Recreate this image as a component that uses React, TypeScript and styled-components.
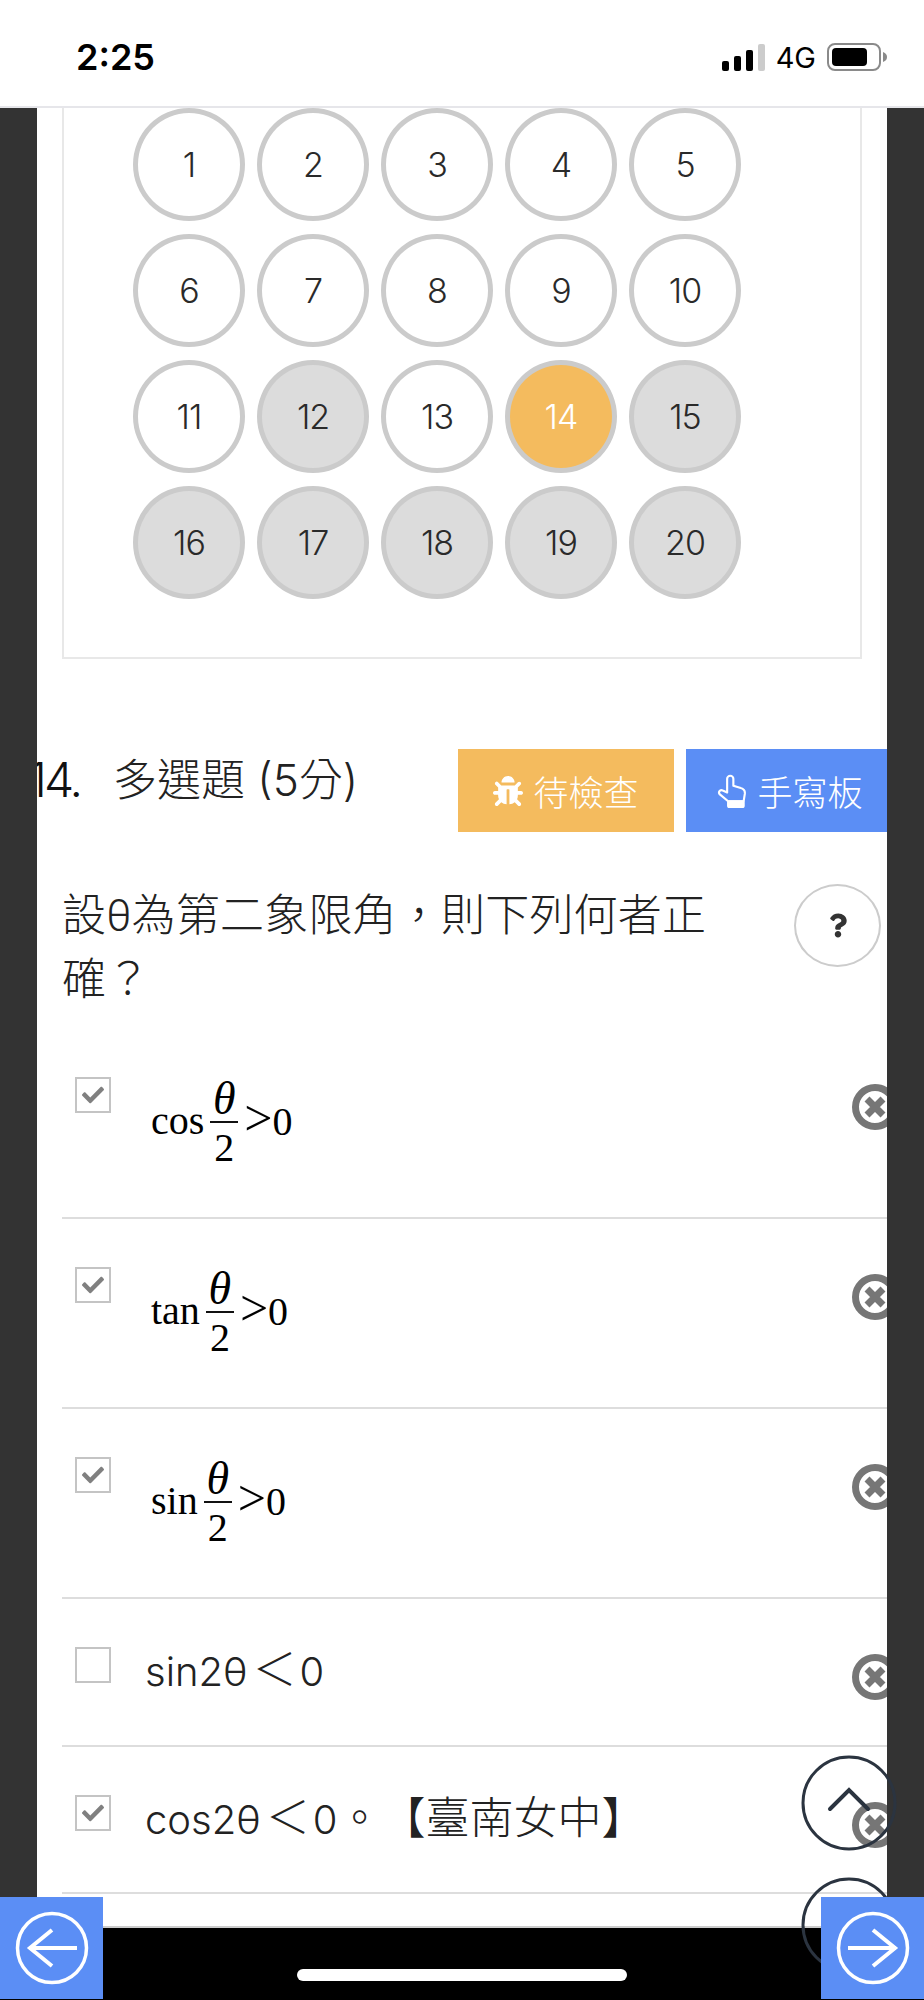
import { FC } from 'react'
import { FaBug, FaCheck, FaQuestion } from 'react-icons/fa'
import styled, { createGlobalStyle } from 'styled-components'

const CJK = `Roboto, "Noto Sans CJK TC", sans-serif`
const MIXED = `Inter, "Noto Sans CJK TC", sans-serif`

const GlobalStyle = createGlobalStyle`
  html, body {
    margin: 0;
    padding: 0;
    background: #fff;
  }
`

const numbers = Array.from({ length: 20 }, (_, i) => i + 1)
const answered = [12, 15, 16, 17, 18, 19, 20]

const Fraction: FC<{ name: string }> = ({ name }) => (
  <MathLine>
    <MathName>{name}</MathName>
    <Frac>
      <FracTop>θ</FracTop>
      <FracBar />
      <FracBottom>2</FracBottom>
    </Frac>
    <MathTail>
      <MathGt>&gt;</MathGt>0
    </MathTail>
  </MathLine>
)

const RemoveIcon = () => (
  <RemoveMark viewBox="0 0 46 46">
    <circle cx="23" cy="23" r="19.5" fill="#fff" stroke="#767676" strokeWidth="7" />
    <path d="M15 15 L31 31 M31 15 L15 31" stroke="#767676" strokeWidth="7" />
  </RemoveMark>
)

const HandIcon = () => (
  <svg viewBox="0 0 30 35" fill="none" stroke="#fff" strokeWidth="2.2" strokeLinejoin="round">
    <path d="M10 19 V5 a3.2 3.2 0 0 1 6.4 0 V12 L24 14.5 c3.5 1 4.6 3 4.2 6 L27 28 H11 L2.5 21 c-2 -2 0 -5.5 3 -4 L10 19 Z" />
    <rect x="11" y="28" width="16" height="6" rx="1" fill="#fff" />
  </svg>
)

const Option: FC<{ height: number; checked?: boolean; children: React.ReactNode }> = ({
  height,
  checked,
  children
}) => (
  <OptionRow $height={height}>
    <CheckBox>{checked && <FaCheck />}</CheckBox>
    <OptionBody>{children}</OptionBody>
    <RemoveIcon />
  </OptionRow>
)

const App = () => (
  <Page lang="zh-TW">
    <GlobalStyle />
    <StatusBar>
      <Clock>2:25</Clock>
      <StatusIcons>
        <svg width="44" height="27" viewBox="0 0 44 27">
          <rect x="1" y="17" width="7" height="10" rx="2" fill="#000" />
          <rect x="13" y="12" width="7" height="15" rx="2" fill="#000" />
          <rect x="25" y="6" width="7" height="21" rx="2" fill="#000" />
          <rect x="37" y="0" width="7" height="27" rx="2" fill="#ccc" />
        </svg>
        <Network>4G</Network>
        <svg width="62" height="28" viewBox="0 0 62 28">
          <rect x="1" y="1" width="52" height="26" rx="7" fill="none" stroke="#8a8a8a" strokeWidth="2" />
          <rect x="5" y="5" width="35" height="18" rx="4" fill="#000" />
          <path d="M56 9 C59 10 60 12 60 14 C60 16 59 18 56 19 Z" fill="#8a8a8a" />
        </svg>
      </StatusIcons>
    </StatusBar>

    <Middle>
      <Side />
      <Content>
        <NumberPanel>
          <NumberGrid>
            {numbers.map((n) => (
              <NumberCircle key={n} $current={n === 14} $answered={answered.includes(n)}>
                {n}
              </NumberCircle>
            ))}
          </NumberGrid>
        </NumberPanel>

        <QuestionHeader>
          <QuestionNo>14.</QuestionNo>
          <QuestionType>多選題 (5分)</QuestionType>
          <ActionButton $color="#f4bb5e" $width={216}>
            <FaBug />
            待檢查
          </ActionButton>
          <ActionButton $color="#5b8ef5" $width={201} $nudge={7}>
            <HandIcon />
            手寫板
          </ActionButton>
        </QuestionHeader>

        <QuestionRow>
          <QuestionText>設θ為第二象限角，則下列何者正確？</QuestionText>
          <HelpButton>
            <FaQuestion />
          </HelpButton>
        </QuestionRow>

        <Option height={190} checked>
          <Fraction name="cos" />
        </Option>
        <Option height={190} checked>
          <Fraction name="tan" />
        </Option>
        <Option height={190} checked>
          <Fraction name="sin" />
        </Option>
        <Option height={148}>
          <OptionText>
            <Latin>sin2θ</Latin>
            <LessThan>＜</LessThan>
            <Latin>0</Latin>
          </OptionText>
        </Option>
        <Option height={147} checked>
          <OptionText>
            <Latin>cos2θ</Latin>
            <LessThan>＜</LessThan>
            <Latin>0</Latin>。【臺南女中】
          </OptionText>
        </Option>
      </Content>
      <Side />
    </Middle>

    <Footer>
      <HomeBar />
    </Footer>

    <ScrollCircle $top={1755}>
      <svg width="96" height="96" viewBox="0 0 96 96">
        <circle cx="48" cy="48" r="46" fill="none" stroke="#2b3440" strokeWidth="3" />
        <path d="M29 54 L48 35 L67 54" fill="none" stroke="#2b3440" strokeWidth="4" strokeLinecap="round" />
      </svg>
    </ScrollCircle>
    <ScrollCircle $top={1877}>
      <svg width="96" height="96" viewBox="0 0 96 96">
        <circle cx="48" cy="48" r="46" fill="none" stroke="#2b3440" strokeWidth="3" />
      </svg>
    </ScrollCircle>

    <NavButton $side="left">
      <svg width="74" height="74" viewBox="0 0 74 74">
        <circle cx="37" cy="37" r="34.5" fill="none" stroke="#fff" strokeWidth="3.5" />
        <path d="M62 37 H15 M37 19 L15 37 L37 55" fill="none" stroke="#fff" strokeWidth="4" />
      </svg>
    </NavButton>
    <NavButton $side="right">
      <svg width="74" height="74" viewBox="0 0 74 74">
        <circle cx="37" cy="37" r="34.5" fill="none" stroke="#fff" strokeWidth="3.5" />
        <path d="M12 37 H59 M37 19 L59 37 L37 55" fill="none" stroke="#fff" strokeWidth="4" />
      </svg>
    </NavButton>
  </Page>
)

const Page = styled.div`
  position: relative;
  width: 924px;
  height: 2000px;
  overflow: hidden;
  display: flex;
  flex-direction: column;
  background: #fff;
  text-spacing-trim: space-all;
`

const StatusBar = styled.div`
  height: 108px;
  flex: none;
  display: flex;
  align-items: center;
  justify-content: space-between;
  padding: 8px 35px 0 76px;
  box-sizing: border-box;
  border-bottom: 2px solid #e6e6ea;
`

const Clock = styled.div`
  font: 600 36px Inter, sans-serif;
  color: #000;
`

const StatusIcons = styled.div`
  display: flex;
  align-items: center;
  gap: 11px;
`

const Network = styled.div`
  font: 400 29px Inter, sans-serif;
  color: #000;
`

const Middle = styled.div`
  flex: 1;
  min-height: 0;
  display: flex;
`

const Side = styled.div`
  width: 37px;
  flex: none;
  background: #333;
`

const Content = styled.div`
  flex: 1;
  min-width: 0;
  overflow: hidden;
  background: #fff;
`

const NumberPanel = styled.div`
  margin: 0 25px;
  height: 551px;
  box-sizing: border-box;
  border: 2px solid #e8e8e8;
  border-top: 0;
  padding-left: 70px;
`

const NumberGrid = styled.div`
  display: grid;
  grid-template-columns: repeat(5, 112px);
  grid-auto-rows: 113px;
  column-gap: 12px;
  row-gap: 13px;
  margin-left: -1px;
`

const NumberCircle = styled.div<{ $current: boolean; $answered: boolean }>`
  display: flex;
  align-items: center;
  justify-content: center;
  border-radius: 50%;
  border: 5px solid #cbcbcb;
  box-sizing: border-box;
  font: 300 34px Inter, sans-serif;
  letter-spacing: -1px;
  color: ${(p) => (p.$current ? '#fff' : '#2a2a2a')};
  background: ${(p) => (p.$current ? '#f4bb5e' : p.$answered ? '#dcdcdc' : '#fff')};
`

const QuestionHeader = styled.div`
  margin-top: 90px;
  height: 83px;
  display: flex;
  align-items: flex-start;
`

const QuestionNo = styled.div`
  width: 86px;
  margin-left: -9px;
  flex: none;
  font: 300 48px/62px Inter, sans-serif;
  letter-spacing: -3px;
  color: #111;
`

const QuestionType = styled.div`
  flex: 1;
  margin-left: -1px;
  font: 300 44px/62px ${MIXED};
  color: #222;
  white-space: nowrap;
`

const ActionButton = styled.div<{ $color: string; $width: number; $nudge?: number }>`
  width: ${(p) => p.$width}px;
  height: 83px;
  flex: none;
  box-sizing: border-box;
  margin-left: 12px;
  padding-left: ${(p) => p.$nudge ?? 0}px;
  display: flex;
  align-items: center;
  justify-content: center;
  gap: 10px;
  background: ${(p) => p.$color};
  color: #fff;
  font: 300 35px ${CJK};
  svg {
    width: 30px;
    height: 34px;
  }
`

const QuestionRow = styled.div`
  margin-top: 52px;
  display: flex;
  justify-content: space-between;
  padding: 0 6px 17px 25px;
`

const QuestionText = styled.div`
  width: 660px;
  font: 300 44px/64px ${CJK};
  letter-spacing: 0.2px;
  color: #222;
`

const HelpButton = styled.div`
  width: 87px;
  height: 83px;
  box-sizing: border-box;
  border: 2px solid #ccc;
  border-radius: 50%;
  display: flex;
  align-items: center;
  justify-content: center;
  color: #333;
  svg {
    width: 18px;
    height: 25px;
  }
`

const OptionRow = styled.div<{ $height: number }>`
  height: ${(p) => p.$height}px;
  box-sizing: border-box;
  margin-left: 25px;
  padding: 48px 0 0 13px;
  display: flex;
  align-items: flex-start;
  border-bottom: 2px solid #ddd;
`

const CheckBox = styled.div`
  width: 36px;
  height: 36px;
  flex: none;
  box-sizing: border-box;
  border: 2px solid #c4c4c4;
  display: flex;
  align-items: center;
  justify-content: center;
  color: #808080;
  svg {
    width: 22px;
    height: 22px;
  }
`

const OptionBody = styled.div`
  flex: 1;
  min-width: 0;
  margin-left: 34px;
`

const OptionText = styled.div`
  font: 300 44px/46px ${MIXED};
  color: #222;
  white-space: nowrap;
`

const Latin = styled.span`
  font-size: 40px;
`

const LessThan = styled.span`
  margin: 0 3px 0 5px;
`

const RemoveMark = styled.svg`
  width: 46px;
  height: 46px;
  flex: none;
  margin: 7px -11px 0 0;
`

const MathLine = styled.div`
  display: inline-flex;
  align-items: flex-start;
  margin-left: 6px;
  font: 400 40px/44px 'Liberation Serif', serif;
  color: #000;
`

const MathName = styled.span`
  margin-top: 22px;
`

const Frac = styled.div`
  display: flex;
  flex-direction: column;
  align-items: center;
  width: 28px;
  margin: 0 6px;
`

const FracTop = styled.span`
  font-size: 46px;
  font-style: italic;
  height: 44px;
`

const FracBar = styled.span`
  align-self: stretch;
  height: 2px;
  background: #111;
`

const FracBottom = styled.span`
  margin-top: 3px;
`

const MathTail = styled.span`
  margin-top: 16px;
  height: 44px;
`

const MathGt = styled.span`
  font-size: 50px;
  line-height: 1;
`

const Footer = styled.div`
  height: 74px;
  flex: none;
  box-sizing: border-box;
  background: #000;
  border-top: 2px solid #ccc;
  display: flex;
  align-items: center;
  justify-content: center;
  padding-top: 22px;
`

const HomeBar = styled.div`
  width: 330px;
  height: 12px;
  border-radius: 6px;
  background: #fff;
`

const ScrollCircle = styled.div<{ $top: number }>`
  position: absolute;
  top: ${(p) => p.$top}px;
  left: 801px;
  width: 96px;
  height: 96px;
`

const NavButton = styled.div<{ $side: 'left' | 'right' }>`
  position: absolute;
  bottom: 1px;
  ${(p) => p.$side}: 0;
  width: 103px;
  height: 102px;
  display: flex;
  align-items: center;
  justify-content: center;
  background: #5b8ef5;
`

export default App
